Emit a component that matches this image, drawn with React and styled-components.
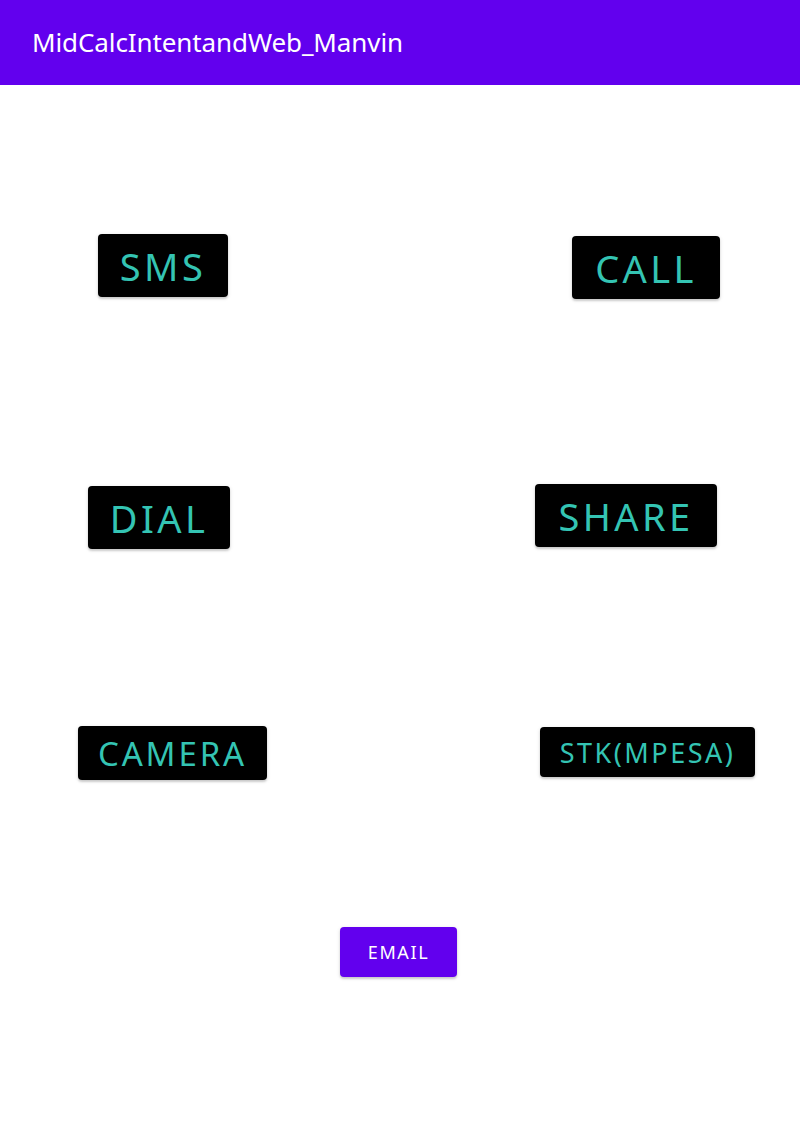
import React from 'react';
import styled, { createGlobalStyle } from 'styled-components';

const GlobalStyle = createGlobalStyle`
  html, body {
    margin: 0;
    padding: 0;
    background: #ffffff;
  }
  body {
    font-family: 'Noto Sans', 'Open Sans', sans-serif;
  }
`

const Screen = styled.div`
  width: 800px;
  height: 1146px;
  background: #ffffff;
  display: flex;
  flex-direction: column;
  overflow: hidden;
`

const AppBar = styled.div`
  height: 85px;
  background: #6200ee;
  display: flex;
  align-items: center;
  padding-left: 32px;
  box-sizing: border-box;
`

const Title = styled.div`
  color: #ffffff;
  font-size: 26px;
  letter-spacing: -0.1px;
  margin-top: -2px;
`

const Row = styled.div`
  display: flex;
  justify-content: ${p => p.$center ? 'center' : 'space-between'};
  align-items: flex-start;
  margin-top: ${p => p.$top}px;
  padding: 0 ${p => p.$right || 0}px 0 ${p => p.$left || 0}px;
`

const Button = styled.button`
  width: ${p => p.$w}px;
  height: ${p => p.$h}px;
  margin-top: ${p => p.$dy || 0}px;
  border: none;
  border-radius: 4px;
  background: ${p => p.$primary ? '#6200ee' : '#000000'};
  color: ${p => p.$primary ? '#ffffff' : '#34c4b3'};
  font-family: 'Noto Sans', 'Open Sans', sans-serif;
  font-size: ${p => p.$fs}px;
  letter-spacing: ${p => p.$ls}px;
  text-transform: uppercase;
  display: flex;
  align-items: center;
  justify-content: center;
  padding: 0;
  box-shadow: 0 2px 2px rgba(0, 0, 0, 0.14), 0 1px 4px rgba(0, 0, 0, 0.12);
`

export default function App() {
  return (
    <Screen>
      <GlobalStyle />
      <AppBar>
        <Title>MidCalcIntentandWeb_Manvin</Title>
      </AppBar>

      <Row $top={149} $left={98} $right={80}>
        <Button $w={130} $h={63} $fs={38} $ls={3.4}>SMS</Button>
        <Button $w={148} $h={63} $dy={2} $fs={38} $ls={3.4}>CALL</Button>
      </Row>

      <Row $top={185} $left={88} $right={83}>
        <Button $w={142} $h={63} $dy={2} $fs={38} $ls={3.4}>DIAL</Button>
        <Button $w={182} $h={63} $fs={38} $ls={3.4}>SHARE</Button>
      </Row>

      <Row $top={177} $left={78} $right={45}>
        <Button $w={189} $h={54} $fs={33} $ls={2.9}>CAMERA</Button>
        <Button $w={215} $h={50} $dy={1} $fs={27} $ls={2.5}>STK(MPESA)</Button>
      </Row>

      <Row $top={147} $right={3} $center>
        <Button $primary $w={117} $h={50} $fs={18} $ls={1.6}>EMAIL</Button>
      </Row>
    </Screen>
  );
}
